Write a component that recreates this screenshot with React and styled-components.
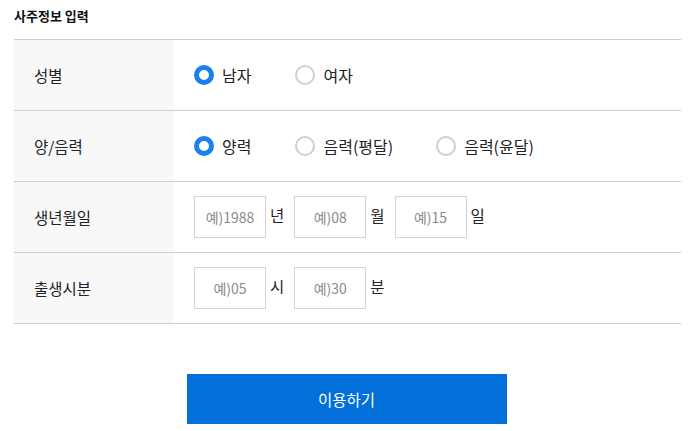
import React, { useState } from "react";
import styled, { createGlobalStyle } from "styled-components";

const GlobalStyle = createGlobalStyle`
  body {
    margin: 0;
    background: #fff;
    font-family: "Noto Sans CJK KR", "Noto Sans", sans-serif;
    color: #222;
  }
`;

const Wrapper = styled.div`
  padding: 0 10px 0 14px;
  width: 691px;
  box-sizing: border-box;
`;

const Title = styled.h3`
  margin: 0;
  padding-top: 6px;
  height: 33px;
  font-size: 13px;
  font-weight: 700;
  line-height: 20px;
  color: #111;
`;

const Table = styled.div`
  border-top: 1px solid #cfcfcf;
`;

const Row = styled.div`
  display: grid;
  grid-template-columns: 160px 1fr;
  height: 71px;
  border-bottom: 1px solid #cfcfcf;
  box-sizing: border-box;
`;

const Label = styled.div`
  background: #f8f8f8;
  display: flex;
  align-items: center;
  padding-left: 20px;
  font-size: 15.5px;
  color: #222;
`;

const Field = styled.div`
  display: flex;
  align-items: center;
  padding-left: 20px;
`;

const RadioLabel = styled.label`
  display: flex;
  align-items: center;
  gap: 8px;
  margin-right: ${(p) => p.$gap}px;
  font-size: 16px;
  color: #222;
  cursor: pointer;
`;

const Circle = styled.span`
  width: 20px;
  height: 20px;
  box-sizing: border-box;
  border-radius: 50%;
  border: ${(p) => (p.$on ? "5px solid #1a7ff0" : "2px solid #cfcfcf")};
  background: #fff;
`;

const Input = styled.input`
  width: 72px;
  height: 42px;
  box-sizing: border-box;
  border: 1px solid #d4d4d4;
  text-align: center;
  font-family: inherit;
  font-size: 14px;
  color: #222;
  outline: none;
  padding: 0;
  &::placeholder {
    color: #8a8a8a;
  }
`;

const Unit = styled.span`
  font-size: 15.5px;
  color: #222;
  margin: 0 10px 0 4px;
  transform: translateY(-2px);
`;

const ButtonBox = styled.div`
  display: flex;
  justify-content: center;
  padding-top: 50px;
  padding-right: 2px;
`;

const Submit = styled.button`
  width: 320px;
  height: 50px;
  border: none;
  background: #0370d9;
  color: #fff;
  font-family: inherit;
  font-size: 15.5px;
  cursor: pointer;
`;

const Radio = ({ label, on, gap, onClick }) => (
  <RadioLabel $gap={gap} onClick={onClick}>
    <Circle $on={on} />
    {label}
  </RadioLabel>
);

export default function App() {
  const [sex, setSex] = useState("m");
  const [cal, setCal] = useState("solar");
  return (
    <Wrapper>
      <GlobalStyle />
      <Title>사주정보 입력</Title>
      <Table>
        <Row>
          <Label>성별</Label>
          <Field>
            <Radio label="남자" gap={44} on={sex === "m"} onClick={() => setSex("m")} />
            <Radio label="여자" gap={0} on={sex === "f"} onClick={() => setSex("f")} />
          </Field>
        </Row>
        <Row>
          <Label>양/음력</Label>
          <Field>
            <Radio label="양력" gap={44} on={cal === "solar"} onClick={() => setCal("solar")} />
            <Radio label="음력(평달)" gap={43} on={cal === "lunar"} onClick={() => setCal("lunar")} />
            <Radio label="음력(윤달)" gap={0} on={cal === "leap"} onClick={() => setCal("leap")} />
          </Field>
        </Row>
        <Row>
          <Label>생년월일</Label>
          <Field>
            <Input placeholder="예)1988" />
            <Unit>년</Unit>
            <Input placeholder="예)08" />
            <Unit>월</Unit>
            <Input placeholder="예)15" />
            <Unit>일</Unit>
          </Field>
        </Row>
        <Row>
          <Label>출생시분</Label>
          <Field>
            <Input placeholder="예)05" />
            <Unit>시</Unit>
            <Input placeholder="예)30" />
            <Unit>분</Unit>
          </Field>
        </Row>
      </Table>
      <ButtonBox>
        <Submit>이용하기</Submit>
      </ButtonBox>
    </Wrapper>
  );
}
